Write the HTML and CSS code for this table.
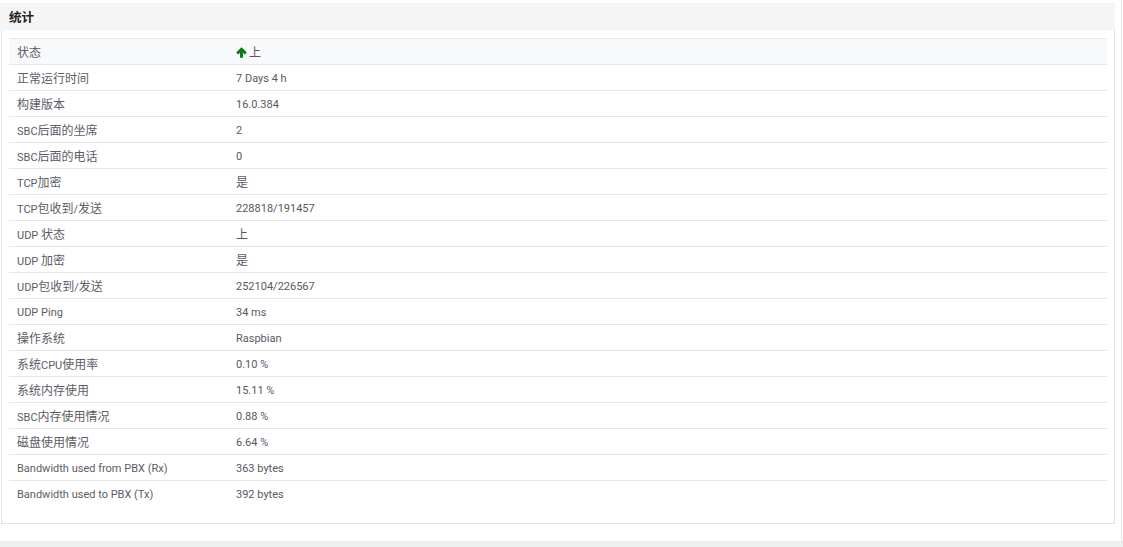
FILE: index.html
```html
<!DOCTYPE html>
<html lang="zh">
<head>
<meta charset="utf-8">
<link rel="stylesheet" href="styles.css">
</head>
<body>
<div class="wrap">
  <div class="panel">
    <div class="panel-heading">统计</div>
    <div class="panel-body">
      <table class="stats">
        <tbody>
          <tr class="first"><td class="k"><span class="c">状态</span></td><td class="v"><svg class="arrow" viewBox="0 0 12 12" width="11" height="11"><path d="M6 0.3 L11.8 6.1 L9.6 8.2 L7.6 6.2 L7.6 11.7 L4.4 11.7 L4.4 6.2 L2.4 8.2 L0.2 6.1 Z" fill="#067a18"/></svg><span class="c">上</span></td></tr>
          <tr><td class="k"><span class="c">正常运行时间</span></td><td class="v">7 Days 4 h</td></tr>
          <tr><td class="k"><span class="c">构建版本</span></td><td class="v">16.0.384</td></tr>
          <tr><td class="k">SBC<span class="c">后面的坐席</span></td><td class="v">2</td></tr>
          <tr><td class="k">SBC<span class="c">后面的电话</span></td><td class="v">0</td></tr>
          <tr><td class="k">TCP<span class="c">加密</span></td><td class="v"><span class="c">是</span></td></tr>
          <tr><td class="k">TCP<span class="c">包收到</span>/<span class="c">发送</span></td><td class="v">228818/191457</td></tr>
          <tr><td class="k">UDP <span class="c">状态</span></td><td class="v"><span class="c">上</span></td></tr>
          <tr><td class="k">UDP <span class="c">加密</span></td><td class="v"><span class="c">是</span></td></tr>
          <tr><td class="k">UDP<span class="c">包收到</span>/<span class="c">发送</span></td><td class="v">252104/226567</td></tr>
          <tr><td class="k">UDP Ping</td><td class="v">34 ms</td></tr>
          <tr><td class="k"><span class="c">操作系统</span></td><td class="v">Raspbian</td></tr>
          <tr><td class="k"><span class="c">系统</span>CPU<span class="c">使用率</span></td><td class="v">0.10 %</td></tr>
          <tr><td class="k"><span class="c">系统内存使用</span></td><td class="v">15.11 %</td></tr>
          <tr><td class="k">SBC<span class="c">内存使用情况</span></td><td class="v">0.88 %</td></tr>
          <tr><td class="k"><span class="c">磁盘使用情况</span></td><td class="v">6.64 %</td></tr>
          <tr><td class="k">Bandwidth used from PBX (Rx)</td><td class="v">363 bytes</td></tr>
          <tr><td class="k">Bandwidth used to PBX (Tx)</td><td class="v">392 bytes</td></tr>
        </tbody>
      </table>
    </div>
  </div>
</div>
<div class="footer-band"></div>
</body>
</html>
```
FILE: styles.css
```css
html, body {
  margin: 0;
  padding: 0;
  background: #ffffff;
}
body {
  width: 1123px;
  height: 547px;
  overflow: hidden;
  font-family: Roboto, "Noto Sans CJK SC", sans-serif;
  font-size: 11px;
  color: #555;
}
.wrap {
  width: 1122px;
  height: 541px;
  box-sizing: border-box;
  border-right: 1px solid #e1e5e5;
  padding-top: 3px;
}
.panel {
  width: 1115px;
}
.panel-heading {
  height: 27px;
  box-sizing: border-box;
  background: #f4f5f4;
  padding-left: 9px;
  line-height: 27px;
  font-family: "Noto Sans CJK SC", sans-serif;
  font-weight: bold;
  font-size: 12.5px;
  color: #222;
}
.panel-body {
  margin-left: 1px;
  box-sizing: border-box;
  height: 494px;
  border: 1px solid #dfe3e3;
  border-top: none;
  padding: 8px 7px 0 7px;
}
.stats {
  width: 1098px;
  border-collapse: collapse;
  border-spacing: 0;
}
.stats tr {
  height: 26px;
  border-top: 1px solid #e4e8e9;
}
.stats tr.first {
  background: #f8f9fb;
  border-bottom: 1px solid #e4e8e9;
}
.stats td {
  padding: 2px 0 0 8px;
  vertical-align: middle;
  height: 23px;
  line-height: 16px;
  white-space: nowrap;
}
.stats td.k {
  width: 211px;
  color: #5c5c66;
}
.stats td.v {
  color: #58585f;
}
.arrow {
  vertical-align: -1px;
  margin-right: 2px;
}
.c {
  font-family: "Noto Sans CJK SC", sans-serif;
  font-size: 12px;
}
.footer-band {
  height: 6px;
  background: #eef0f0;
}
```
